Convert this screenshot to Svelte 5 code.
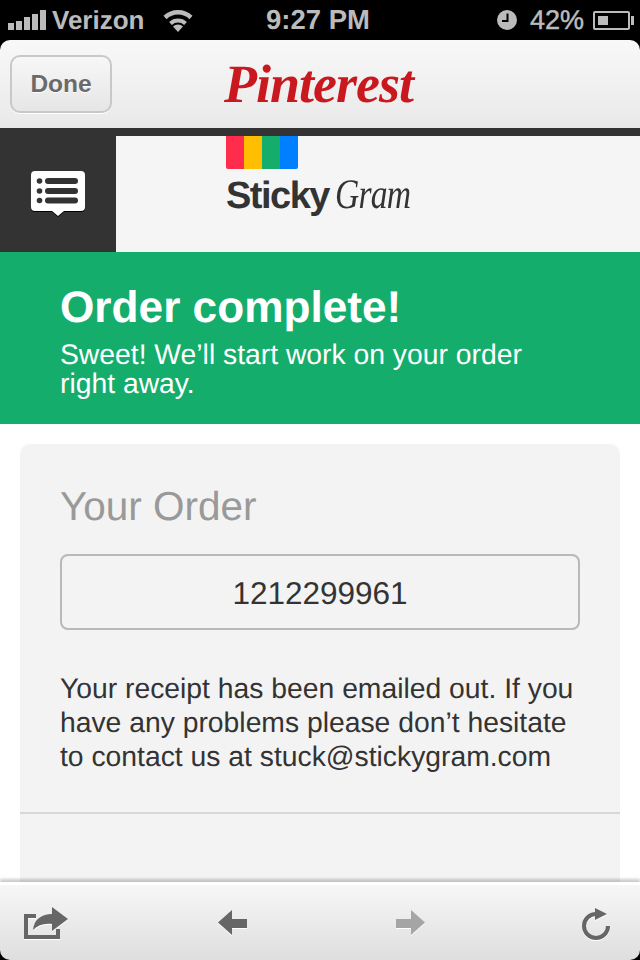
<script>
  let stripes = ['#ff2d4b', '#ffbf00', '#15ad6c', '#0080ff'];
  let signal = [7, 9, 13, 16, 20];
</script>

<div class="phone">
  <div class="status">
    <div class="status-left">
      <div class="signal">
        {#each signal as h}
          <span style="height: {h}px"></span>
        {/each}
      </div>
      <span>Verizon</span>
      <svg class="wifi" width="32" height="24" viewBox="0 0 32 24">
        <path d="M16 24l-5-5.500a7 7 0 0 1 10 0z" fill="#bbb" />
        <path d="M8.500 15.500a11 11 0 0 1 15 0" fill="none" stroke="#bbb" stroke-width="4" />
        <path d="M3 9.500a19 19 0 0 1 26 0" fill="none" stroke="#bbb" stroke-width="4.500" />
      </svg>
    </div>
    <span class="clock">9:27 PM</span>
    <div class="status-right">
      <svg width="20" height="20" viewBox="0 0 20 20">
        <circle cx="10" cy="10" r="10" fill="#bbb" />
        <path d="M10.500 3.500v7.500h-5.500" fill="none" stroke="#000" stroke-width="2" />
      </svg>
      <span class="pct">42%</span>
      <div class="battery"><div class="charge"></div></div>
    </div>
  </div>

  <div class="topbar">
    <button class="done">Done</button>
    <span class="pinterest">Pinterest</span>
  </div>

  <div class="strip"></div>

  <header>
    <div class="menu">
      <svg width="56" height="46" viewBox="0 0 56 46">
        <path d="M5 0h46a4 4 0 0 1 4 4v32a4 4 0 0 1-4 4h-17l-6 5-6-5h-17a4 4 0 0 1-4-4v-32a4 4 0 0 1 4-4z" fill="#fff" />
        <g fill="#333">
          <circle cx="9.500" cy="10" r="2.800" />
          <circle cx="9.500" cy="20" r="2.800" />
          <circle cx="9.500" cy="29.500" r="2.800" />
          <rect x="15" y="7" width="33" height="6" rx="3" />
          <rect x="15" y="17" width="33" height="6" rx="3" />
          <rect x="15" y="26.500" width="33" height="6" rx="3" />
        </g>
      </svg>
    </div>
    <div class="brand">
      <div class="stripes">
        {#each stripes as c}
          <span style="background: {c}"></span>
        {/each}
      </div>
      <div class="wordmark"><span class="sticky">Sticky</span><span class="gram">Gram</span></div>
    </div>
  </header>

  <section class="banner">
    <h1>Order complete!</h1>
    <p>Sweet! We’ll start work on your order right away.</p>
  </section>

  <main>
    <div class="card">
      <div class="card-top">
        <h2>Your Order</h2>
        <div class="order-no">1212299961</div>
        <p>Your receipt has been emailed out. If you have any problems please don’t hesitate to contact us at stuck@stickygram.com</p>
      </div>
    </div>
  </main>

  <div class="toolbar">
    <svg class="share" width="44" height="36" viewBox="0 0 44 36">
      <path d="M0 9h12v4h-8v17h28v-6h4v10h-36z" fill="#666" />
      <path d="M9 25c1-11 9-16 19-16v-7l16 12-16 12v-7c-8-1-14 1-19 6z" fill="#666" />
    </svg>
    <svg class="back" width="29" height="25" viewBox="0 0 29 25">
      <path d="M0 12.500l14-12.500v9h15v9h-15v7z" fill="#666" />
    </svg>
    <svg class="forward" width="29" height="25" viewBox="0 0 29 25">
      <path d="M29 12.500l-14-12.500v9h-15v9h15v7z" fill="#a5a5a5" />
    </svg>
    <svg class="reload" width="28" height="34" viewBox="0 0 28 34">
      <path d="M14 8a12 12 0 1 0 12 12" fill="none" stroke="#666" stroke-width="4" />
      <path d="M13 2l12 6-12 6z" fill="#666" />
    </svg>
  </div>
</div>

<style>
  :global(body) {
    margin: 0;
    background: #000;
  }

  .phone {
    width: 640px;
    height: 960px;
    display: flex;
    flex-direction: column;
    overflow: hidden;
    background: #000;
    font-family: 'Liberation Sans', Arial, sans-serif;
    text-rendering: geometricPrecision;
  }

  .status {
    height: 40px;
    flex-shrink: 0;
    display: flex;
    align-items: center;
    padding: 0 7px 0 8px;
    color: #bbb;
    font-size: 26px;
    font-weight: bold;
    box-sizing: border-box;
  }

  .status-left {
    width: 258px;
    display: flex;
    align-items: center;
    gap: 6px;
  }

  .signal {
    display: flex;
    align-items: flex-end;
    gap: 2px;
    height: 20px;
  }

  .signal span {
    width: 6px;
    background: #bbb;
  }

  .wifi {
    margin-left: 12px;
  }

  .clock {
    font-size: 27.500px;
  }

  .status-right {
    margin-left: auto;
    display: flex;
    align-items: center;
  }

  .pct {
    margin-left: 13px;
    font-size: 27px;
    font-weight: normal;
    -webkit-text-stroke: 0.5px #bbb;
  }

  .battery {
    margin-left: 9px;
    margin-right: 3px;
    width: 27px;
    height: 9px;
    border: 2px solid #bbb;
    padding: 3px;
    position: relative;
    border-radius: 2px;
  }

  .battery::after {
    content: '';
    position: absolute;
    right: -6px;
    top: 3px;
    width: 3px;
    height: 9px;
    background: #bbb;
  }

  .charge {
    width: 10px;
    height: 100%;
    background: #bbb;
  }

  .topbar {
    height: 88px;
    flex-shrink: 0;
    display: flex;
    align-items: center;
    padding: 0 10px 1px;
    box-sizing: border-box;
    border-radius: 10px 10px 0 0;
    background: linear-gradient(#f8f8f8, #e9e9e9);
  }

  .done {
    width: 102px;
    height: 58px;
    padding: 0;
    border: 2px solid #c8c8c8;
    border-radius: 10px;
    background: linear-gradient(#f7f7f7, #e6e6e6);
    box-shadow: 0 1px 0 #fff;
    color: #6a6a6a;
    font-family: inherit;
    font-size: 24.500px;
    font-weight: bold;
    text-shadow: 0 1px 0 #fff;
  }

  .pinterest {
    margin-left: 112px;
    color: #c9191f;
    font-family: 'Liberation Serif', serif;
    font-size: 54px;
    font-style: italic;
    font-weight: bold;
    letter-spacing: -1px;
    line-height: 1;
  }

  .strip {
    height: 8px;
    flex-shrink: 0;
    background: #333;
  }

  header {
    height: 116px;
    flex-shrink: 0;
    display: flex;
    background: #f5f5f5;
  }

  .menu {
    width: 116px;
    background: #333;
    display: flex;
    align-items: center;
    justify-content: center;
  }

  .menu svg {
    filter: drop-shadow(0 1px 0 #000);
  }

  .brand {
    margin-left: 110px;
  }

  .stripes {
    display: flex;
    width: 72px;
    height: 33px;
    border-radius: 0 0 2px 2px;
    overflow: hidden;
  }

  .stripes span {
    flex: 1;
  }

  .wordmark {
    display: flex;
    align-items: baseline;
    color: #333;
    margin-top: 3px;
    line-height: 46px;
  }

  .sticky {
    font-size: 38px;
    font-weight: bold;
    letter-spacing: -1.500px;
  }

  .gram {
    margin-left: 6px;
    font-family: 'Liberation Serif', serif;
    font-size: 42px;
    font-style: italic;
    letter-spacing: -1px;
    transform: scaleX(0.8);
    transform-origin: left;
  }

  .banner {
    height: 172px;
    flex-shrink: 0;
    padding: 32px 60px 0;
    box-sizing: border-box;
    background: #15ad6c;
    color: #fff;
  }

  h1 {
    margin: 0;
    font-size: 44.200px;
    line-height: 48px;
  }

  .banner p {
    margin: 8px 40px 0 0;
    font-size: 28.300px;
    line-height: 29px;
  }

  main {
    flex: 1;
    min-height: 0;
    background: #fff;
    padding: 20px 20px 0;
  }

  .card {
    height: 100%;
    background: #f3f3f3;
    border-radius: 10px 10px 0 0;
  }

  .card-top {
    padding: 40px 40px 39px;
    border-bottom: 2px solid #d8d8d8;
  }

  h2 {
    margin: 0;
    color: #999;
    font-size: 40.500px;
    font-weight: normal;
    line-height: 44px;
  }

  .order-no {
    margin-top: 26px;
    height: 72px;
    line-height: 74px;
    border: 2px solid #b8b8b8;
    border-radius: 8px;
    text-align: center;
    color: #333;
    font-size: 31.500px;
  }

  .card-top p {
    margin: 41px 0 0;
    color: #333;
    font-size: 28.300px;
    line-height: 34px;
  }

  .toolbar {
    height: 78px;
    flex-shrink: 0;
    display: flex;
    align-items: center;
    padding: 0 0 0 24px;
    box-sizing: border-box;
    border-top: 3px solid #fff;
    border-radius: 0 0 10px 10px;
    background: linear-gradient(#f8f7f7, #dededf);
    box-shadow: 0 -3px 3px rgba(0, 0, 0, 0.2);
    position: relative;
  }

  .toolbar svg {
    filter: drop-shadow(0 1px 0 #fff);
  }

  .back {
    margin-left: 150px;
  }

  .forward {
    margin-left: 149px;
  }

  .reload {
    margin-left: 157px;
  }
</style>
